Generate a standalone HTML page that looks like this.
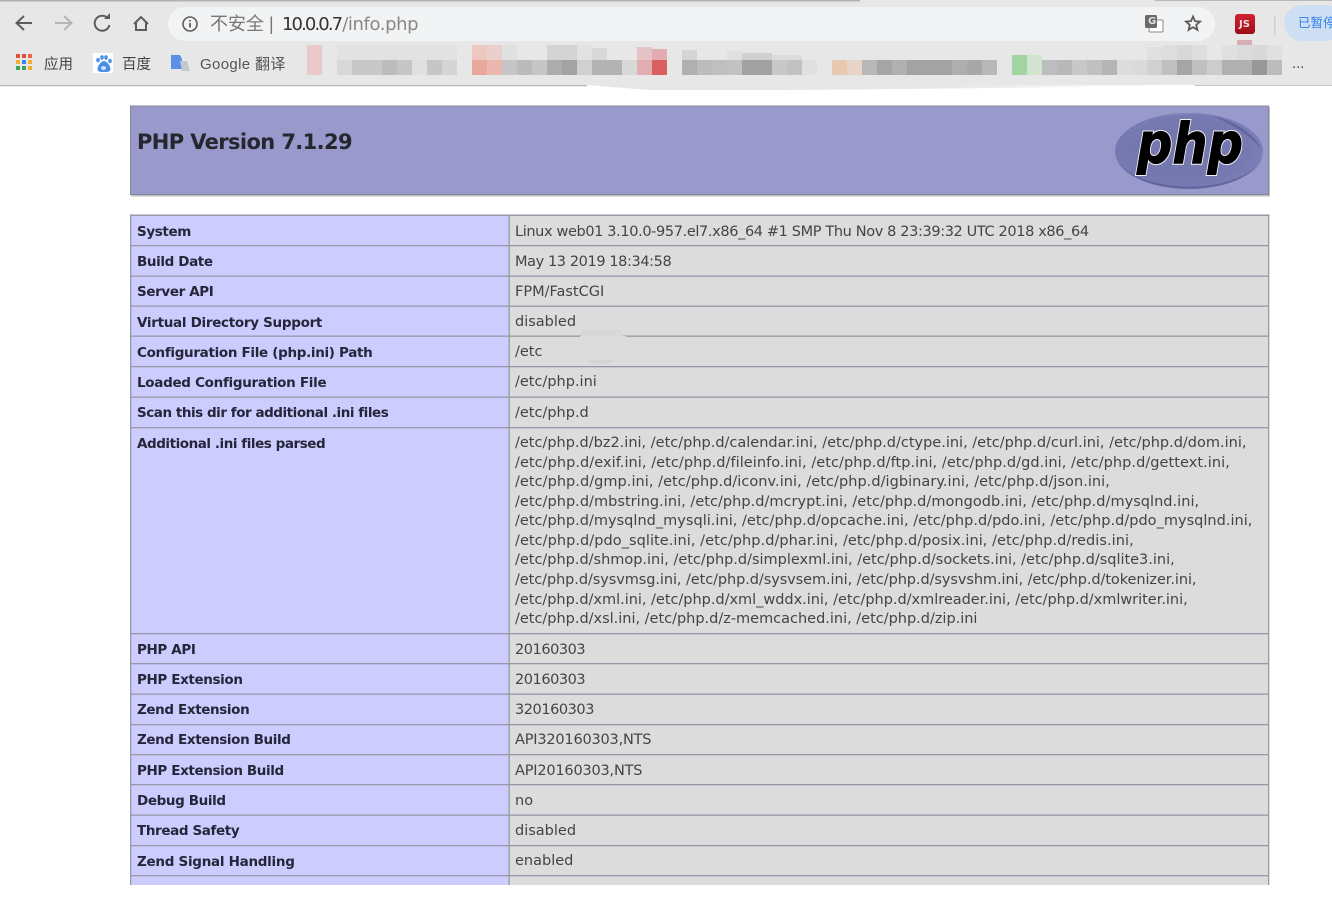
<!DOCTYPE html>
<html><head><meta charset="utf-8">
<style>
html,body{margin:0;padding:0;background:#fff}
#p{position:relative;width:1332px;height:905px;overflow:hidden;background:#fff;font-family:"DejaVu Sans",sans-serif}
#p svg{position:absolute;left:0;top:0}
.t{position:absolute;white-space:pre;font-size:14.5px;line-height:20px;letter-spacing:0;color:#444;filter:blur(.35px)}
.l{left:137px;color:#26263a;font-weight:bold;font-size:13.5px;letter-spacing:-.38px;margin-top:1px}
.v{left:515px;margin-top:1px}
.d{letter-spacing:-.45px}
#clip{position:absolute;left:0;top:0;width:1332px;height:885px;overflow:hidden}
</style></head><body><div id="p">
<div id="clip">
<svg width="1332" height="905" viewBox="0 0 1332 905">
<defs><linearGradient id="jsg" x1="0" y1="0" x2="0" y2="1"><stop offset="0" stop-color="#d2232f"/><stop offset="1" stop-color="#9a0d1b"/></linearGradient>
<linearGradient id="wd" x1="0" y1="0" x2="1" y2="0"><stop offset="0" stop-color="#e5e5e5"/><stop offset=".6" stop-color="#e8e8e8"/><stop offset="1" stop-color="#ffffff"/></linearGradient>
<radialGradient id="eg" cx=".45" cy=".5" r=".55"><stop offset="0" stop-color="#7377ad"/><stop offset=".8" stop-color="#7579b0"/><stop offset="1" stop-color="#7d80b8"/></radialGradient></defs>
<!-- toolbar -->
<rect width="1332" height="85" fill="#e7e7e7"/>
<rect width="860" height="1.5" fill="#b0b0b0"/>
<rect x="1155" width="177" height="1" fill="#b8b8b8"/>
<rect y="85" width="587" height="1.200" fill="#b4b4b4"/>
<rect x="1195" y="85" width="137" height="1" fill="#c4c4c4"/>
<path d="M587 85H1195L1000 88L800 90H650Z" fill="url(#wd)"/>
<rect x="168" y="7" width="1047" height="34" rx="17" fill="#f1f3f4"/>
<rect x="1284" y="5" width="60" height="36" rx="18" fill="#cfdff3"/>
<rect x="1274" y="15" width="1.5" height="20" fill="#d0d0d0"/>
<!-- nav icons -->
<g fill="none" stroke="#5c5c5c" stroke-width="2">
<path d="M32 23H17M24 16l-7.500 7 7.500 7"/>
<path d="M55 23H71M64 16l7.500 7-7.500 7" stroke="#b5b5b5"/>
<path d="M108 18.500A7.500 7.500 0 1 0 109.500 25"/>
<path d="M104 19H110V13" fill="#5c5c5c" stroke="none"/>
<path d="M134 24l7-7 7 7M136 22v8h10v-8"/>
<circle cx="190" cy="24" r="7" stroke-width="1.600"/>
<path d="M190 23v4.500M190 20v1.500" stroke-width="1.800"/>
</g>
<!-- translate, star, JS -->
<rect x="1149" y="20" width="14" height="12" rx="1" fill="#fff" stroke="#8a8a8a"/>
<rect x="1145" y="15" width="12" height="13" rx="1.500" fill="#6a6a6a"/>
<path d="M1193 16.500l2 4.700 5 .4-3.800 3.300 1.200 5-4.400-2.700-4.400 2.700 1.200-5-3.800-3.300 5-.4z" fill="none" stroke="#5a5a5a" stroke-width="1.800"/>
<rect x="1235" y="14" width="20" height="20" rx="3" fill="url(#jsg)"/>
<rect x="1237" y="40" width="15" height="5" fill="#d6adb2"/>
<!-- bookmark icons -->
<g>
<g fill="#e34a3c"><rect x="16" y="54" width="4" height="4"/><rect x="22" y="54" width="4" height="4"/><rect x="28" y="54" width="4" height="4" fill="#ea6a40"/></g>
<g fill="#3e82f0"><rect x="16" y="60" width="4" height="4" fill="#f0b030"/><rect x="22" y="60" width="4" height="4"/><rect x="28" y="60" width="4" height="4" fill="#f0b030"/></g>
<g fill="#3aa757"><rect x="16" y="66" width="4" height="4"/><rect x="22" y="66" width="4" height="4"/><rect x="28" y="66" width="4" height="4" fill="#f0b030"/></g>
<rect x="93" y="53" width="20" height="20" fill="#fff"/>
<g fill="#4a90ea"><ellipse cx="98" cy="60" rx="1.800" ry="2.300"/><ellipse cx="102" cy="57.500" rx="1.800" ry="2.400"/><ellipse cx="106" cy="57.500" rx="1.800" ry="2.400"/><ellipse cx="110" cy="61" rx="1.800" ry="2.300"/><path d="M104 61c-3 0-6.500 5-6.500 8s3 3 6.500 3 6.500 0 6.500-3-3.500-8-6.500-8z"/></g>
<ellipse cx="103.500" cy="68" rx="2.500" ry="2" fill="#cfe2fa"/>
<path d="M171 55h9l2 4v10h-11z" fill="#5b8fe8"/>
<path d="M180 61h7l3 10h-8z" fill="#c4c8cf"/>
</g>
<!-- pixelated bookmarks -->
<g id="px">
<rect x="307" y="45" width="15" height="30" fill="#e9c9c9"/>
<rect x="337" y="45" width="120" height="15" fill="#e2e2e2"/>
<rect x="337" y="60" width="15" height="15" fill="#d8d8d8"/><rect x="352" y="60" width="30" height="15" fill="#c8c8c8"/><rect x="382" y="60" width="15" height="15" fill="#bcbcbc"/><rect x="397" y="60" width="15" height="15" fill="#c6c6c6"/><rect x="412" y="60" width="15" height="15" fill="#e0e0e0"/><rect x="427" y="60" width="15" height="15" fill="#c6c6c6"/><rect x="442" y="60" width="15" height="15" fill="#d5d5d5"/>
<rect x="472" y="45" width="15" height="15" fill="#ecc8c0"/><rect x="487" y="45" width="15" height="15" fill="#e9d0cc"/><rect x="502" y="45" width="15" height="15" fill="#e0e0e0"/>
<rect x="547" y="45" width="30" height="15" fill="#d4d4d4"/><rect x="577" y="45" width="15" height="15" fill="#e2e2e2"/><rect x="592" y="48" width="15" height="12" fill="#d8d8d8"/>
<rect x="637" y="47" width="15" height="13" fill="#e5c2c5"/><rect x="652" y="49" width="15" height="11" fill="#e3adb0"/><rect x="682" y="50" width="15" height="10" fill="#d5d5d5"/>
<rect x="727" y="51" width="15" height="9" fill="#e0e0e0"/><rect x="742" y="53" width="30" height="7" fill="#d0d0d0"/><rect x="772" y="55" width="30" height="5" fill="#dcdcdc"/>
<rect x="472" y="60" width="15" height="15" fill="#e9a89c"/><rect x="487" y="60" width="15" height="15" fill="#ebb8b0"/><rect x="502" y="60" width="15" height="15" fill="#c6c6c6"/><rect x="517" y="60" width="15" height="15" fill="#bbb"/><rect x="532" y="60" width="15" height="15" fill="#c6c6c6"/><rect x="547" y="60" width="15" height="15" fill="#adadad"/><rect x="562" y="60" width="15" height="15" fill="#a3a3a3"/><rect x="577" y="60" width="15" height="15" fill="#d0d0d0"/><rect x="592" y="60" width="30" height="15" fill="#b3b3b3"/><rect x="622" y="60" width="15" height="15" fill="#d8d8d8"/><rect x="637" y="60" width="15" height="15" fill="#e2adb0"/><rect x="652" y="60" width="15" height="15" fill="#d95f60"/>
<rect x="682" y="60" width="15" height="15" fill="#b0b0b0"/><rect x="697" y="60" width="15" height="15" fill="#bcbcbc"/><rect x="712" y="60" width="15" height="15" fill="#bfbfbf"/><rect x="727" y="60" width="15" height="15" fill="#c2c2c2"/><rect x="742" y="60" width="30" height="15" fill="#a2a2a2"/><rect x="772" y="60" width="15" height="15" fill="#c8c8c8"/><rect x="787" y="60" width="15" height="15" fill="#c2c2c2"/><rect x="802" y="60" width="15" height="15" fill="#e0e0e0"/>
<rect x="832" y="60" width="15" height="15" fill="#e8c8ae"/><rect x="847" y="60" width="15" height="15" fill="#e8d5c8"/><rect x="862" y="60" width="15" height="15" fill="#b8b8b8"/><rect x="877" y="60" width="15" height="15" fill="#a5a5a5"/><rect x="892" y="60" width="15" height="15" fill="#b0b0b0"/><rect x="907" y="60" width="45" height="15" fill="#a3a3a3"/><rect x="952" y="60" width="15" height="15" fill="#aeaeae"/><rect x="967" y="60" width="15" height="15" fill="#a8a8a8"/><rect x="982" y="60" width="15" height="15" fill="#b8b8b8"/>
<rect x="1012" y="55" width="15" height="20" fill="#a0d4a0"/><rect x="1027" y="55" width="15" height="20" fill="#d0e4d0"/>
<rect x="1042" y="60" width="15" height="15" fill="#bdbdbd"/><rect x="1057" y="60" width="15" height="15" fill="#b8b8b8"/><rect x="1072" y="60" width="15" height="15" fill="#c8c8c8"/><rect x="1087" y="60" width="15" height="15" fill="#c0c0c0"/><rect x="1102" y="60" width="15" height="15" fill="#b5b5b5"/><rect x="1117" y="60" width="15" height="15" fill="#dcdcdc"/><rect x="1132" y="60" width="15" height="15" fill="#dadada"/><rect x="1147" y="60" width="15" height="15" fill="#d0d0d0"/><rect x="1162" y="60" width="15" height="15" fill="#c0c0c0"/><rect x="1177" y="60" width="15" height="15" fill="#a5a5a5"/><rect x="1192" y="60" width="15" height="15" fill="#c0c0c0"/><rect x="1207" y="60" width="15" height="15" fill="#cccccc"/><rect x="1222" y="60" width="30" height="15" fill="#b0b0b0"/><rect x="1252" y="60" width="15" height="15" fill="#989898"/><rect x="1267" y="60" width="15" height="15" fill="#bcbcbc"/>
<rect x="1147" y="47" width="15" height="13" fill="#e0e0e0"/><rect x="1162" y="45" width="15" height="15" fill="#dedede"/><rect x="1177" y="45" width="15" height="15" fill="#d8d8d8"/><rect x="1192" y="45" width="15" height="15" fill="#dedede"/><rect x="1222" y="45" width="15" height="15" fill="#e0e0e0"/><rect x="1237" y="45" width="15" height="15" fill="#dcdcdc"/><rect x="1252" y="45" width="15" height="15" fill="#d8d8d8"/><rect x="1267" y="45" width="15" height="15" fill="#e0e0e0"/>
</g>
<!-- php header -->
<rect x="131" y="107" width="1139" height="89.500" fill="#bdbdbd"/>
<rect x="130.500" y="106" width="1138" height="88.500" fill="#9999cc" stroke="#858598"/>
<ellipse cx="1189" cy="151" rx="74" ry="38" fill="url(#eg)"/>
<path d="M1115 152a74 37 0 0 0 148 0a74 34.500 0 0 1-148 0z" fill="#54588f" opacity=".6"/>
<path d="M1130 132C1150 117 1180 113 1200 113C1170 114 1145 120 1130 132Z" fill="#b4b6df" opacity=".7"/>
<path d="M1212 116C1235 120 1255 135 1262 150C1250 135 1232 124 1212 116Z" fill="#55598f" opacity=".6"/>
<g font-family="'DejaVu Sans',sans-serif" font-size="56" font-weight="bold" font-style="italic">
<text x="1137" y="163" fill="#fff" stroke="#fff" stroke-width="3" textLength="106" lengthAdjust="spacingAndGlyphs" filter="none" opacity=".9">php</text>
<text x="1137" y="163" fill="#000" stroke="#000" stroke-width="1" textLength="106" lengthAdjust="spacingAndGlyphs">php</text>
</g>
<!-- table -->
<rect x="130" y="215" width="379" height="680" fill="#ccccff"/>
<rect x="509" y="215" width="760" height="680" fill="#dcdcdc"/>
<g fill="#9797a6">
<rect x="130" y="214.500" width="1139.500" height="1.500"/>
<rect x="130" y="215" width="1.300" height="680"/>
<rect x="508.500" y="215" width="1.300" height="680"/>
<rect x="1268" y="215" width="1.300" height="680"/>
<rect x="130" y="245" width="1139" height="1.300"/><rect x="130" y="275.500" width="1139" height="1.300"/><rect x="130" y="305.500" width="1139" height="1.300"/><rect x="130" y="335.500" width="1139" height="1.300"/><rect x="130" y="366" width="1139" height="1.300"/><rect x="130" y="396.500" width="1139" height="1.300"/><rect x="130" y="427" width="1139" height="1.300"/><rect x="130" y="633" width="1139" height="1.300"/><rect x="130" y="663" width="1139" height="1.300"/><rect x="130" y="693.500" width="1139" height="1.300"/><rect x="130" y="724" width="1139" height="1.300"/><rect x="130" y="754" width="1139" height="1.300"/><rect x="130" y="784" width="1139" height="1.300"/><rect x="130" y="814.500" width="1139" height="1.300"/><rect x="130" y="845" width="1139" height="1.300"/><rect x="130" y="875" width="1139" height="1.300"/>
</g>
<path d="M582 330H621L626 345H580Z" fill="#d8d8d8"/>
<path d="M580 336H626V345H580Z" fill="#dcdcdc"/>
<path d="M587 360H615Q601 368 587 360Z" fill="#d4d4d4"/>
</svg>
<div style="position:absolute;left:137px;top:127px;font:bold 21px/30px 'DejaVu Sans',sans-serif;letter-spacing:-.62px;color:#26262e;filter:blur(.35px);white-space:pre">PHP Version 7.1.29</div>
<div class="t" style="left:210px;top:14px;font-family:'Liberation Sans','Noto Sans CJK SC',sans-serif;font-size:18px;letter-spacing:0;color:#777">不安全 |</div>
<div class="t" style="left:282px;top:15px;font-family:'DejaVu Sans',sans-serif;font-size:18px;letter-spacing:-1.9px;color:#333">10.0.0.7<span style="color:#888;letter-spacing:-.4px;margin-left:1px">/info.php</span></div>
<div class="t" style="left:44px;top:55px;font-family:'Liberation Sans','Noto Sans CJK SC',sans-serif;font-size:14.500px;letter-spacing:0;color:#444">应用</div>
<div class="t" style="left:122px;top:55px;font-family:'Liberation Sans','Noto Sans CJK SC',sans-serif;font-size:14.500px;letter-spacing:0;color:#444">百度</div>
<div class="t" style="left:200px;top:55px;font-family:'Liberation Sans','Noto Sans CJK SC',sans-serif;font-size:15px;letter-spacing:.35px;color:#555">Google 翻译</div>
<div class="t" style="left:1292px;top:55px;font-size:13px;letter-spacing:0;color:#444">...</div>
<div class="t" style="left:1298px;top:13px;font-family:'Liberation Sans','Noto Sans CJK SC',sans-serif;font-size:12.500px;letter-spacing:0;color:#2f7fe8">已暂停</div>
<div class="t" style="left:1239px;top:15px;font-size:10px;font-weight:bold;letter-spacing:0;color:#f3dcdc">JS</div>
<div class="t" style="left:1148px;top:12px;font-size:10px;font-weight:bold;letter-spacing:0;color:#e0e0e0">G</div>
<div class="t l" style="top:221px">System</div><div class="t v" style="top:221px;letter-spacing:-.37px">Linux web01 3.10.0-957.el7.x86_64 #1 SMP Thu Nov 8 23:39:32 UTC 2018 x86_64</div>
<div class="t l" style="top:251px">Build Date</div><div class="t v" style="top:251px;letter-spacing:-.4px">May 13 2019 18:34:58</div>
<div class="t l" style="top:281px">Server API</div><div class="t v" style="top:281px">FPM/FastCGI</div>
<div class="t l" style="top:312px;letter-spacing:-.3px">Virtual Directory Support</div><div class="t v" style="top:311px">disabled</div>
<div class="t l" style="top:342px;letter-spacing:-.32px">Configuration File (php.ini) Path</div><div class="t v" style="top:341px">/etc</div>
<div class="t l" style="top:372px;letter-spacing:-.3px">Loaded Configuration File</div><div class="t v" style="top:371px">/etc/php.ini</div>
<div class="t l" style="top:402px;letter-spacing:-.46px">Scan this dir for additional .ini files</div><div class="t v" style="top:402px">/etc/php.d</div>
<div class="t l" style="top:433px;letter-spacing:-.45px">Additional .ini files parsed</div>
<div class="t v" style="top:433px;line-height:19.560px">/etc/php.d/bz2.ini, /etc/php.d/calendar.ini, /etc/php.d/ctype.ini, /etc/php.d/curl.ini, /etc/php.d/dom.ini,
<span style="letter-spacing:.055px">/etc/php.d/exif.ini, /etc/php.d/fileinfo.ini, /etc/php.d/ftp.ini, /etc/php.d/gd.ini, /etc/php.d/gettext.ini,</span>
<span style="letter-spacing:.045px">/etc/php.d/gmp.ini, /etc/php.d/iconv.ini, /etc/php.d/igbinary.ini, /etc/php.d/json.ini,</span>
<span style="letter-spacing:.03px">/etc/php.d/mbstring.ini, /etc/php.d/mcrypt.ini, /etc/php.d/mongodb.ini, /etc/php.d/mysqlnd.ini,</span>
<span style="letter-spacing:.02px">/etc/php.d/mysqlnd_mysqli.ini, /etc/php.d/opcache.ini, /etc/php.d/pdo.ini, /etc/php.d/pdo_mysqlnd.ini,</span>
<span style="letter-spacing:.055px">/etc/php.d/pdo_sqlite.ini, /etc/php.d/phar.ini, /etc/php.d/posix.ini, /etc/php.d/redis.ini,</span>
<span style="letter-spacing:-.01px">/etc/php.d/shmop.ini, /etc/php.d/simplexml.ini, /etc/php.d/sockets.ini, /etc/php.d/sqlite3.ini,</span>
<span style="letter-spacing:-.08px">/etc/php.d/sysvmsg.ini, /etc/php.d/sysvsem.ini, /etc/php.d/sysvshm.ini, /etc/php.d/tokenizer.ini,</span>
<span style="letter-spacing:-.02px">/etc/php.d/xml.ini, /etc/php.d/xml_wddx.ini, /etc/php.d/xmlreader.ini, /etc/php.d/xmlwriter.ini,</span>
<span style="letter-spacing:-.01px">/etc/php.d/xsl.ini, /etc/php.d/z-memcached.ini, /etc/php.d/zip.ini</span></div>
<div class="t l" style="top:639px">PHP API</div><div class="t v d" style="top:639px">20160303</div>
<div class="t l" style="top:669px">PHP Extension</div><div class="t v d" style="top:669px">20160303</div>
<div class="t l" style="top:699px">Zend Extension</div><div class="t v d" style="top:699px">320160303</div>
<div class="t l" style="top:729px">Zend Extension Build</div><div class="t v" style="top:729px;letter-spacing:-.2px">API320160303,NTS</div>
<div class="t l" style="top:760px">PHP Extension Build</div><div class="t v" style="top:760px;letter-spacing:-.2px">API20160303,NTS</div>
<div class="t l" style="top:790px">Debug Build</div><div class="t v" style="top:790px">no</div>
<div class="t l" style="top:820px">Thread Safety</div><div class="t v" style="top:820px">disabled</div>
<div class="t l" style="top:851px;letter-spacing:-.28px">Zend Signal Handling</div><div class="t v" style="top:850px">enabled</div>
<div class="t l" style="top:881px">Zend Memory Manager</div><div class="t v" style="top:881px">enabled</div>
</div>
</div></body></html>
